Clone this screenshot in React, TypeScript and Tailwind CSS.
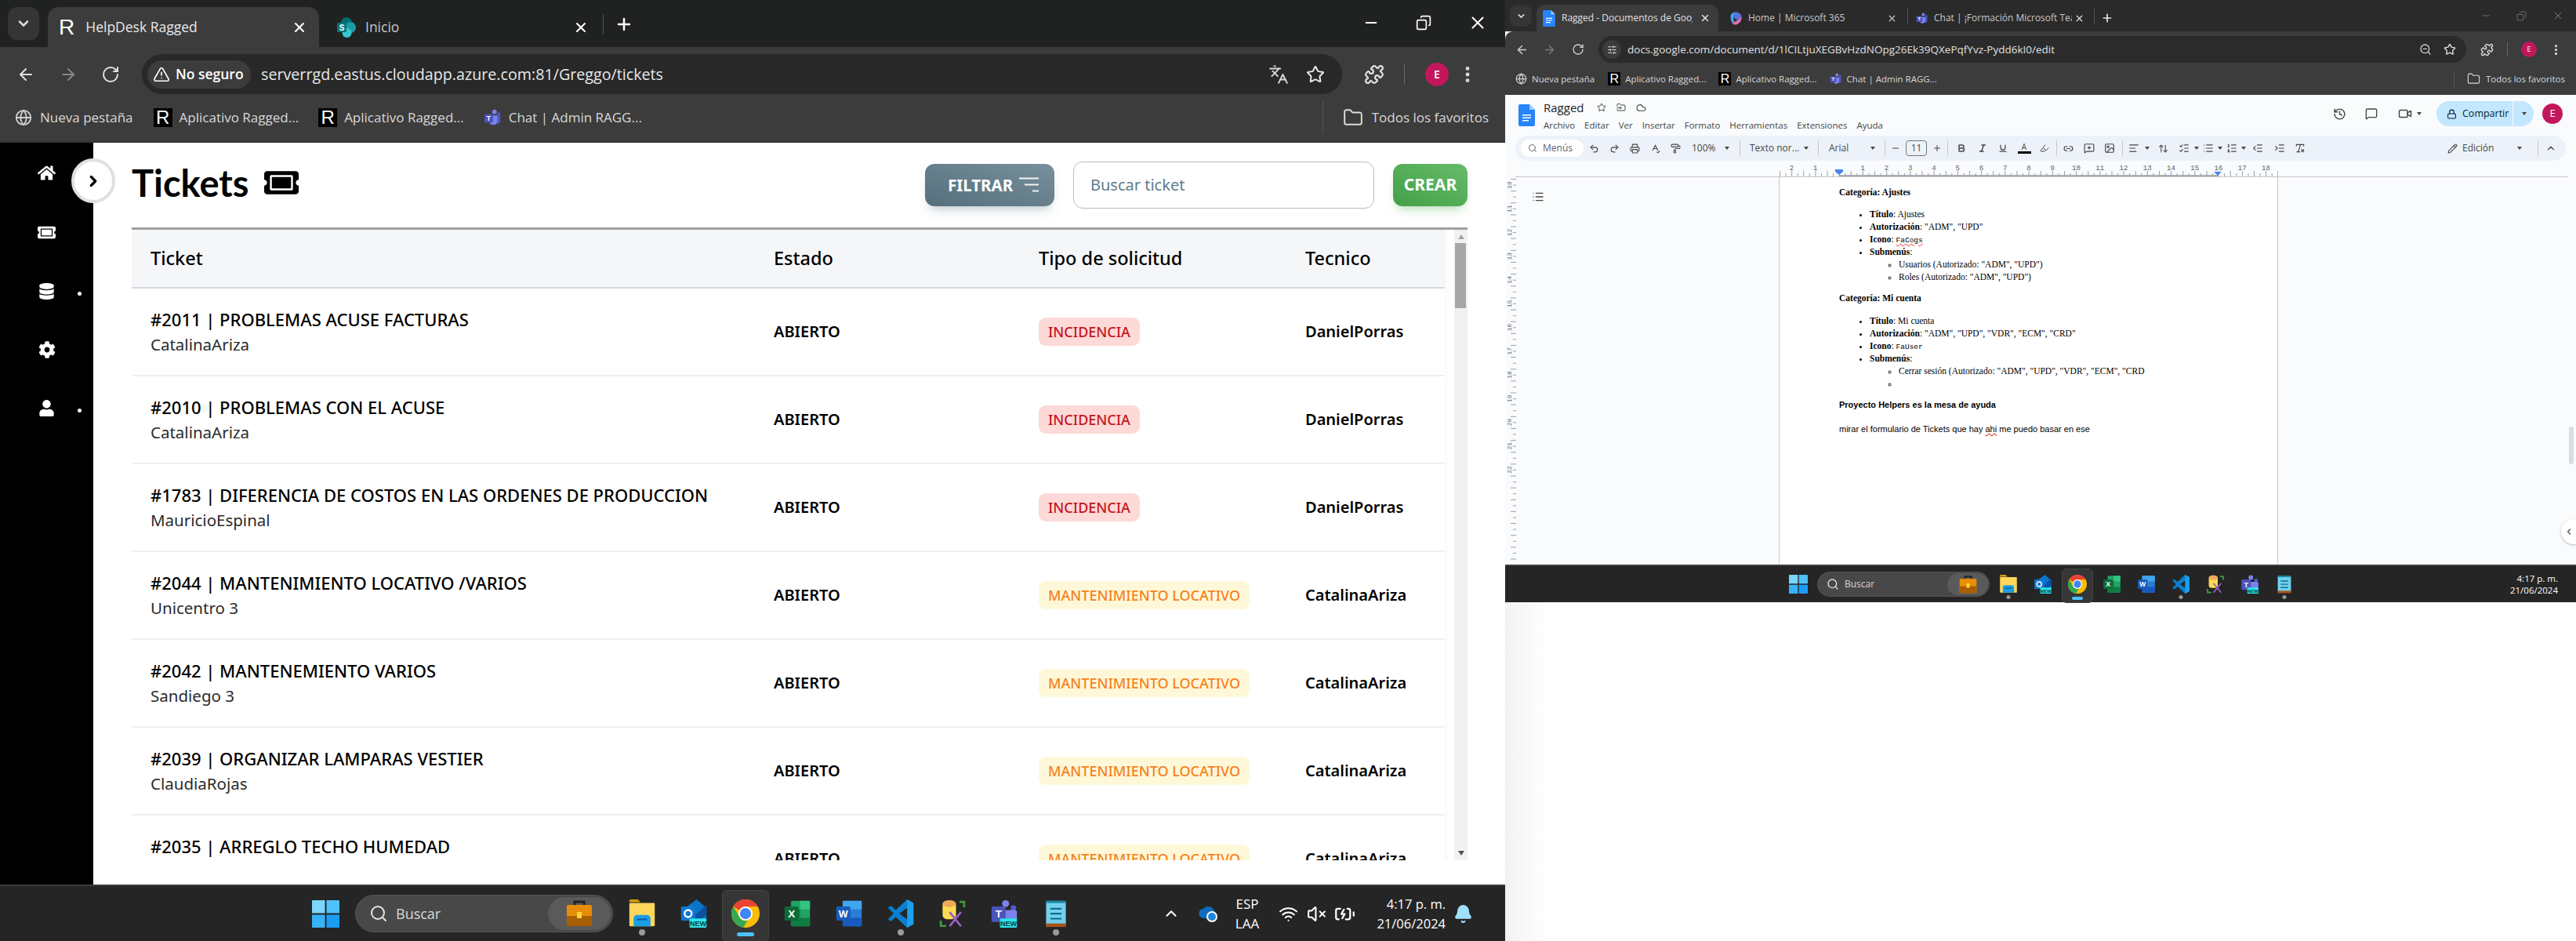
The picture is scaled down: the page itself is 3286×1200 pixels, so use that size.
import type {ReactNode} from 'react';
import {
  ArrowLeft,
  ArrowRight,
  AlignLeft,
  Bold,
  ChevronLeft,
  ChevronRight,
  ChevronUp,
  Cloud,
  Folder,
  Globe,
  History,
  Image,
  IndentDecrease,
  IndentIncrease,
  Italic,
  Link2,
  List,
  ListChecks,
  ListOrdered,
  Lock,
  MessageSquare,
  MessageSquarePlus,
  Minus,
  MoreVertical,
  PaintRoller,
  Pencil,
  Plus,
  Printer,
  Puzzle,
  Redo2,
  RotateCw,
  Search,
  SlidersHorizontal,
  SpellCheck,
  Star,
  TriangleAlert,
  Underline,
  Undo2,
  Video,
  X,
  ZoomOut,
  Bell,
  ChevronDown,
  Wifi,
  VolumeX,
  BatteryCharging,
  FolderInput,
  RemoveFormatting,
  Highlighter,
  Languages,
  Copy,
  ArrowUpDown,
} from 'lucide-react';
import {FaCog, FaDatabase, FaHome, FaTicketAlt, FaUser} from 'react-icons/fa';

const UI = "font-['Open_Sans',sans-serif]";
const PAGE = "font-['Noto_Sans',sans-serif]";

function RLogo({className}: {className: string}) {
  return (
    <span className={`flex items-center justify-center bg-black text-white font-['Liberation_Sans',sans-serif] font-normal ${className}`}>
      R
    </span>
  );
}

function TeamsIcon({size}: {size: number}) {
  return (
    <svg width={size} height={size} viewBox="0 0 24 24">
      <circle cx="15" cy="4" r="3.2" fill="#7b83eb" />
      <circle cx="21" cy="7" r="2.4" fill="#5059c9" />
      <path d="M14 9h9v8a4 4 0 0 1-5 3.5z" fill="#5059c9" />
      <path d="M8 9h11v9a6 6 0 0 1-11 1z" fill="#7b83eb" />
      <rect x="1" y="7" width="12" height="12" rx="1.5" fill="#4b53bc" />
      <text x="7" y="16.5" textAnchor="middle" fontSize="10" fontWeight="700" fill="#fff" fontFamily="Liberation Sans">T</text>
    </svg>
  );
}

function SharePointIcon() {
  return (
    <svg width="24" height="26" viewBox="0 0 24 26">
      <circle cx="12" cy="7" r="7" fill="#036c70" />
      <circle cx="17" cy="13" r="7" fill="#1a9ba1" />
      <circle cx="12.5" cy="20" r="6" fill="#37c6d0" />
      <rect x="0" y="7" width="12" height="12" rx="1.5" fill="#03787c" />
      <text x="6" y="16.5" textAnchor="middle" fontSize="10" fontWeight="700" fill="#fff" fontFamily="Liberation Sans">S</text>
    </svg>
  );
}

function DocsIcon({w, h}: {w: number; h: number}) {
  return (
    <svg width={w} height={h} viewBox="0 0 21 28">
      <path d="M2 0h12l7 7v19a2 2 0 0 1-2 2H2a2 2 0 0 1-2-2V2a2 2 0 0 1 2-2z" fill="#2684fc" />
      <path d="M14 0l7 7h-7z" fill="#a5c8fb" />
      <path d="M5 13h11v1.6H5zM5 16.5h11v1.6H5zM5 20h8v1.6H5z" fill="#fff" />
    </svg>
  );
}

function M365Icon() {
  return (
    <svg width="15" height="17" viewBox="0 0 15 17">
      <path d="M6 0.5C9 -0.5 14 2.5 14.5 6L11 12 4 7z" fill="#5b6fe0" />
      <path d="M0.5 6C0.5 3 3 1 6 0.5L4 7l1 6-2 2C1.5 13 0.5 9 0.5 6z" fill="#3fa9e8" />
      <path d="M5 13l6-3 3.5-4c.8 5-3 10.5-7.5 10.5-1.5 0-3-.5-4-1.5z" fill="#e66bb0" />
    </svg>
  );
}

function FileExplorer({size}: {size: number}) {
  return (
    <svg width={size} height={size} viewBox="0 0 36 40">
      <path d="M0 2a2 2 0 0 1 2-2h10l4 4H0z" fill="#d89c0b" />
      <rect x="0" y="5" width="36" height="33" rx="1.5" fill="#ffd65c" />
      <path d="M6 27a5 5 0 0 1 5-5h14a5 5 0 0 1 5 5v11H6z" fill="#1b9de2" />
      <rect x="11" y="27" width="14" height="2.4" fill="#0a5fb0" />
    </svg>
  );
}

function OutlookIcon({size}: {size: number}) {
  return (
    <svg width={size} height={size} viewBox="0 0 36 40">
      <path d="M6 12 22 0l14 12v18H6z" fill="#0a74c9" />
      <path d="M18 24 36 8v14L22 32z" fill="#0b4fa0" />
      <rect x="0" y="10" width="20" height="20" rx="2" fill="#0f78d4" />
      <circle cx="10" cy="20" r="5" fill="none" stroke="#fff" strokeWidth="2.6" />
      <rect x="12" y="27" width="24" height="13" rx="1.5" fill="#2ce6e6" />
      <text x="24" y="37.5" textAnchor="middle" fontSize="10" fontWeight="700" fill="#063a4a" fontFamily="Liberation Sans">NEW</text>
    </svg>
  );
}

function ChromeIcon({size}: {size: number}) {
  return (
    <svg width={size} height={size} viewBox="0 0 48 48">
      <circle cx="24" cy="24" r="24" fill="#fbbc04" />
      <path d="M24 0a24 24 0 0 1 20.8 12H24a12 12 0 0 0-10.4 6L3.2 12A24 24 0 0 1 24 0z" fill="#ea4335" />
      <path d="M3.2 12l10.4 18a12 12 0 0 0 13.4 5.6L20.6 47.8A24 24 0 0 1 3.2 12z" fill="#34a853" />
      <circle cx="24" cy="24" r="12" fill="#fff" />
      <circle cx="24" cy="24" r="9.5" fill="#4285f4" />
    </svg>
  );
}

function ExcelIcon({size}: {size: number}) {
  return (
    <svg width={size} height={size} viewBox="0 0 36 40">
      <rect x="9" y="2" width="27" height="36" rx="2" fill="#21a366" />
      <rect x="22" y="2" width="14" height="12" fill="#33c481" />
      <rect x="9" y="26" width="27" height="12" rx="1" fill="#107c41" />
      <rect x="9" y="14" width="13" height="12" fill="#107c41" />
      <rect x="0" y="10" width="20" height="20" rx="2" fill="#0c6b38" />
      <text x="10" y="25" textAnchor="middle" fontSize="15" fontWeight="700" fill="#fff" fontFamily="Liberation Sans">X</text>
    </svg>
  );
}

function WordIcon({size}: {size: number}) {
  return (
    <svg width={size} height={size} viewBox="0 0 36 40">
      <rect x="9" y="2" width="27" height="36" rx="2" fill="#2b7cd3" />
      <rect x="9" y="2" width="27" height="12" fill="#41a5ee" />
      <rect x="9" y="26" width="27" height="12" rx="1" fill="#185abd" />
      <rect x="0" y="10" width="20" height="20" rx="2" fill="#185abd" />
      <text x="10" y="25" textAnchor="middle" fontSize="14" fontWeight="700" fill="#fff" fontFamily="Liberation Sans">W</text>
    </svg>
  );
}

function VSCodeIcon({size}: {size: number}) {
  return (
    <svg width={size} height={size} viewBox="0 0 36 40">
      <path d="M27 0l9 5v30l-9 5-16-15-7 6-4-3 8-8-8-8 4-3 7 6z" fill="#0a7fd1" />
      <path d="M27 0l9 5v30l-9 5V28L16 20l11-8z" fill="#1ba1ee" />
      <path d="M27 12L16 20l11 8z" fill="#252525" />
    </svg>
  );
}

function DbToolIcon({size}: {size: number}) {
  return (
    <svg width={size} height={size} viewBox="0 0 36 40">
      <path d="M28 2h8v9h-3V5h-5zM0 30h3v6h6v3H0z" fill="#3f9b3f" />
      <rect x="4" y="2" width="19" height="26" rx="6" fill="#fbdc52" />
      <ellipse cx="13.5" cy="6" rx="9.5" ry="5" fill="#efa95a" />
      <path d="M14 38l16-20M30 38L14 18" stroke="#9b5fc0" strokeWidth="3" />
    </svg>
  );
}

function TeamsNewIcon({size}: {size: number}) {
  return (
    <svg width={size} height={size} viewBox="0 0 36 40">
      <circle cx="20" cy="6" r="5" fill="#7b83eb" />
      <circle cx="31" cy="12" r="4" fill="#5059c9" />
      <rect x="18" y="15" width="18" height="20" rx="3" fill="#7b83eb" />
      <rect x="0" y="10" width="20" height="22" rx="2" fill="#4b53bc" />
      <text x="10" y="26" textAnchor="middle" fontSize="15" fontWeight="700" fill="#fff" fontFamily="Liberation Sans">T</text>
      <rect x="12" y="27" width="24" height="13" rx="1.5" fill="#2ce6e6" />
      <text x="24" y="37.5" textAnchor="middle" fontSize="10" fontWeight="700" fill="#063a4a" fontFamily="Liberation Sans">NEW</text>
    </svg>
  );
}

function NotepadIcon({size}: {size: number}) {
  return (
    <svg width={size} height={size} viewBox="0 0 36 40">
      <rect x="4" y="2" width="28" height="36" rx="2" fill="#74d0ec" />
      <rect x="4" y="34" width="28" height="5" fill="#a5531d" />
      <path d="M4 2h28v3H4z" fill="#1487a8" />
      <path d="M10 12h16v2.4H10zM10 19h16v2.4H10zM10 26h16v2.4H10z" fill="#0e6f90" />
    </svg>
  );
}

function WinLogo({size}: {size: number}) {
  return (
    <svg width={size} height={size} viewBox="0 0 36 36">
      <path d="M1 0h16v17H0V1a1 1 0 0 1 1-1z" fill="#7bd6fd" />
      <path d="M19 0h16a1 1 0 0 1 1 1v16H19z" fill="#4dc2fb" />
      <path d="M0 19h17v17H1a1 1 0 0 1-1-1z" fill="#38b1f8" />
      <path d="M19 19h17v16a1 1 0 0 1-1 1H19z" fill="#1a9df5" />
    </svg>
  );
}

function Briefcase({size}: {size: number}) {
  return (
    <svg width={size} height={size} viewBox="0 0 34 34">
      <path d="M11 6V2h12v4" fill="none" stroke="#222" strokeWidth="3" />
      <rect x="1" y="6" width="32" height="27" rx="2" fill="#e88d07" />
      <rect x="1" y="20" width="32" height="13" rx="1" fill="#a85e03" />
      <rect x="14" y="15" width="6" height="8" fill="#ffd43a" />
    </svg>
  );
}

const taskApps = [
  {Icon: FileExplorer, dot: true, active: false},
  {Icon: OutlookIcon, dot: false, active: false},
  {Icon: ChromeIcon, dot: false, active: true},
  {Icon: ExcelIcon, dot: false, active: false},
  {Icon: WordIcon, dot: false, active: false},
  {Icon: VSCodeIcon, dot: true, active: false},
  {Icon: DbToolIcon, dot: false, active: false},
  {Icon: TeamsNewIcon, dot: false, active: false},
  {Icon: NotepadIcon, dot: true, active: false},
];

function TaskApps({size, large}: {size: number; large: boolean}) {
  return (
    <div className={`flex items-center ${large ? 'gap-[30px]' : 'gap-[20px]'}`}>
      {taskApps.map(({Icon, dot, active}, i) => (
        <div key={i} className="relative flex items-center justify-center">
          {active && (
            <span className={`absolute rounded-[6px] bg-[#363636] border border-[#444] ${large ? '-inset-x-[12px] -top-[12px] -bottom-[18px]' : '-inset-x-[8px] -top-[8px] -bottom-[12px]'}`} />
          )}
          <span className="relative flex">
            <Icon size={size} />
          </span>
          {dot && (
            <span className={`absolute left-1/2 -translate-x-1/2 rounded-full bg-[#9a9a9a] ${large ? 'w-[8px] h-[8px] -bottom-[10px]' : 'w-[5px] h-[5px] -bottom-[7px]'}`} />
          )}
          {active && (
            <span className={`absolute left-1/2 -translate-x-1/2 rounded-full bg-[#4cc2ff] ${large ? 'w-[22px] h-[5px] -bottom-[11px]' : 'w-[14px] h-[4px] -bottom-[8px]'}`} />
          )}
        </div>
      ))}
    </div>
  );
}

function Taskbar({large}: {large: boolean}) {
  if (large) {
    return (
      <footer className={`h-[72px] shrink-0 bg-[#252525] border-t-2 border-[#3d3d3d] flex items-center text-white ${UI}`}>
        <div className="ml-[398px]">
          <WinLogo size={35} />
        </div>
        <div className="ml-[20px] w-[329px] h-[48px] rounded-full bg-[#484848] border border-[#555] flex items-center pl-[17px] pr-[2px]">
          <Search size={24} strokeWidth={2} className="text-[#e5e5e5]" />
          <span className="ml-[10px] text-[18px] text-[#d8d8d8]">Buscar</span>
          <span className="ml-auto w-[80px] h-[42px] rounded-full bg-[#5a5a5a] flex items-center justify-center">
            <Briefcase size={34} />
          </span>
        </div>
        <div className="ml-[19px]">
          <TaskApps size={36} large />
        </div>
        <ChevronUp size={22} strokeWidth={2.2} className="ml-[118px]" />
        <svg width="24" height="26" viewBox="0 0 24 26" className="ml-[24px]">
          <path d="M3 18a6 6 0 0 1 3-11 8 8 0 0 1 14 3 5 5 0 0 1-1 9H6z" fill="#0f6cbd" />
          <circle cx="17" cy="17" r="7" fill="#fff" />
          <circle cx="17" cy="17" r="5" fill="#1a86d8" />
        </svg>
        <div className="ml-[18px] w-[40px] flex flex-col items-center text-[17px] leading-[25px]">
          <span>ESP</span>
          <span>LAA</span>
        </div>
        <Wifi size={25} className="ml-[20px]" />
        <VolumeX size={25} className="ml-[11px]" />
        <BatteryCharging size={27} className="ml-[10px]" />
        <div className="ml-[20px] w-[95px] flex flex-col items-end text-[16.5px] leading-[25px]">
          <span className="whitespace-nowrap">4:17 p. m.</span>
          <span>21/06/2024</span>
        </div>
        <Bell size={25} fill="#9fe0fb" stroke="#9fe0fb" className="ml-[10px]" />
      </footer>
    );
  }
  return (
    <footer className={`h-[48px] shrink-0 bg-[#252525] border-t-2 border-[#3d3d3d] flex items-center text-white ${UI}`}>
      <div className="ml-[362px]">
        <WinLogo size={24} />
      </div>
      <div className="ml-[12px] w-[220px] h-[32px] rounded-full bg-[#484848] border border-[#555] flex items-center pl-[11px] pr-[1px]">
        <Search size={16} className="text-[#e5e5e5]" />
        <span className="ml-[7px] text-[12px] text-[#d8d8d8]">Buscar</span>
        <span className="ml-auto w-[52px] h-[28px] rounded-full bg-[#5a5a5a] flex items-center justify-center">
          <Briefcase size={23} />
        </span>
      </div>
      <div className="ml-[12px]">
        <TaskApps size={24} large={false} />
      </div>
      <div className="ml-auto mr-[23px] flex flex-col items-end text-[11.5px] leading-[15px]">
        <span>4:17 p. m.</span>
        <span>21/06/2024</span>
      </div>
    </footer>
  );
}

function LeftChrome() {
  return (
    <div className={`shrink-0 ${UI} text-[#dcdcdc]`}>
      <div className="h-[60px] bg-[#202222] flex items-end pl-[10px] relative">
        <span className="mb-[9px] w-[40px] h-[42px] rounded-[12px] bg-[#353535] flex items-center justify-center">
          <ChevronDown size={20} strokeWidth={3} />
        </span>
        <div className="ml-[11px] w-[346px] h-[51px] rounded-t-[14px] bg-[#3c3c3c] flex items-center pl-[14px] pr-[15px]">
          <span className="text-[28px] font-['Liberation_Sans',sans-serif] text-white leading-none">R</span>
          <span className="ml-[14px] text-[17.5px] text-[#e8e8e8]">HelpDesk Ragged</span>
          <X size={20} strokeWidth={2.5} className="ml-auto text-white" />
        </div>
        <div className="w-[362px] h-[51px] flex items-center pl-[23px] pr-[18px] border-r-0">
          <SharePointIcon />
          <span className="ml-[12px] text-[17.5px] text-[#c8c8c8]">Inicio</span>
          <X size={20} strokeWidth={2.5} className="ml-auto text-white" />
        </div>
        <div className="mb-[8px] h-[43px] flex items-center">
          <span className="w-[1px] h-[26px] bg-[#555]" />
          <Plus size={24} strokeWidth={2.5} className="ml-[14px] text-white" />
        </div>
        <div className="ml-auto flex items-center gap-[46px] pr-[22px] self-start h-[58px]">
          <Minus size={22} strokeWidth={2} className="text-white" />
          <Copy size={20} strokeWidth={2} className="text-white -scale-x-100" />
          <X size={26} strokeWidth={1.8} className="text-white" />
        </div>
      </div>
      <div className="h-[60px] bg-[#3c3c3c] flex items-center pt-[9px] pl-[21px] pr-[21px]">
        <ArrowLeft size={24} strokeWidth={2} className="text-[#e0e0e0]" />
        <ArrowRight size={24} strokeWidth={2} className="ml-[30px] text-[#858585]" />
        <RotateCw size={24} strokeWidth={2} className="ml-[30px] text-[#e0e0e0]" />
        <div className="ml-[28px] w-[1531px] h-[51px] rounded-full bg-[#282828] flex items-center pl-[7px] pr-[22px]">
          <span className="w-[132px] h-[36px] rounded-full bg-[#3c3c3c] flex items-center pl-[7px]">
            <TriangleAlert size={22} strokeWidth={1.8} className="text-white" />
            <span className="ml-[7px] text-[17.5px] font-semibold text-white whitespace-nowrap">No seguro</span>
          </span>
          <span className="ml-[13px] text-[19.7px] text-[#e8e8e8]">serverrgd.eastus.cloudapp.azure.com:81/Greggo/tickets</span>
          <Languages size={26} strokeWidth={1.8} className="ml-auto text-[#d8d8d8]" />
          <Star size={24} strokeWidth={2} className="ml-[22px] text-[#e8e8e8]" />
        </div>
        <Puzzle size={26} strokeWidth={2} className="ml-[28px] text-[#e0e0e0]" />
        <span className="ml-[25px] w-[1px] h-[26px] bg-[#666]" />
        <span className="ml-[26px] w-[30px] h-[30px] rounded-full bg-[#c2185b] flex items-center justify-center text-white text-[14px] font-semibold">E</span>
        <MoreVertical size={26} strokeWidth={2.5} className="ml-[11px] text-[#dcdcdc]" />
      </div>
      <div className="h-[62px] bg-[#3c3c3c] flex items-center pl-[19px] pr-[21px] border-b-2 border-[#343434] text-[17px] text-[#d8d8d8]">
        <Globe size={22} className="text-[#cfcfcf]" />
        <span className="ml-[10px] whitespace-nowrap">Nueva pestaña</span>
        <RLogo className="ml-[26px] w-[24px] h-[24px] text-[24px]" />
        <span className="ml-[9px] whitespace-nowrap">Aplicativo Ragged...</span>
        <RLogo className="ml-[25px] w-[24px] h-[24px] text-[24px]" />
        <span className="ml-[9px] whitespace-nowrap">Aplicativo Ragged...</span>
        <span className="ml-[25px] flex">
          <TeamsIcon size={22} />
        </span>
        <span className="ml-[10px] whitespace-nowrap">Chat | Admin RAGG...</span>
        <span className="ml-auto w-[1px] h-[42px] bg-[#555]" />
        <Folder size={26} strokeWidth={1.8} className="ml-[25px] text-[#dcdcdc]" />
        <span className="ml-[11px] whitespace-nowrap">Todos los favoritos</span>
      </div>
    </div>
  );
}

type TicketRow = {
  title: string;
  owner: string;
  type: 'INCIDENCIA' | 'MANTENIMIENTO LOCATIVO';
  tech: string;
};

const rows: TicketRow[] = [
  {title: '#2011 | PROBLEMAS ACUSE FACTURAS', owner: 'CatalinaAriza', type: 'INCIDENCIA', tech: 'DanielPorras'},
  {title: '#2010 | PROBLEMAS CON EL ACUSE', owner: 'CatalinaAriza', type: 'INCIDENCIA', tech: 'DanielPorras'},
  {title: '#1783 | DIFERENCIA DE COSTOS EN LAS ORDENES DE PRODUCCION', owner: 'MauricioEspinal', type: 'INCIDENCIA', tech: 'DanielPorras'},
  {title: '#2044 | MANTENIMIENTO LOCATIVO /VARIOS', owner: 'Unicentro 3', type: 'MANTENIMIENTO LOCATIVO', tech: 'CatalinaAriza'},
  {title: '#2042 | MANTENEMIENTO VARIOS', owner: 'Sandiego 3', type: 'MANTENIMIENTO LOCATIVO', tech: 'CatalinaAriza'},
  {title: '#2039 | ORGANIZAR LAMPARAS VESTIER', owner: 'ClaudiaRojas', type: 'MANTENIMIENTO LOCATIVO', tech: 'CatalinaAriza'},
  {title: '#2035 | ARREGLO TECHO HUMEDAD', owner: '\u00a0', type: 'MANTENIMIENTO LOCATIVO', tech: 'CatalinaAriza'},
];

function TicketsPage() {
  return (
    <div className="flex-1 min-h-0 flex bg-white relative">
      <aside className="w-[119px] shrink-0 bg-black text-white flex flex-col items-center pt-[27px] gap-[53px]">
        <FaHome size={23} />
        <FaTicketAlt size={23} />
        <div className="relative flex">
          <FaDatabase size={21} />
          <span className="absolute -right-[34px] top-[11px] w-[5px] h-[5px] rounded-full bg-white" />
        </div>
        <FaCog size={22} />
        <div className="relative flex">
          <FaUser size={21} />
          <span className="absolute -right-[34px] top-[11px] w-[5px] h-[5px] rounded-full bg-white" />
        </div>
      </aside>
      <span className="absolute left-[91px] top-[20px] w-[56px] h-[57px] rounded-full bg-white border-[4px] border-[#e0e0e0] flex items-center justify-center">
        <ChevronRight size={22} strokeWidth={3.5} className="text-black" />
      </span>
      <main className={`flex-1 min-w-0 pl-[49px] pr-[48px] flex flex-col ${PAGE}`}>
        <div className="h-[108px] shrink-0 flex items-center">
          <h1 className="text-[47px] font-['Lato',sans-serif] font-bold text-black leading-none mt-[-6px]">Tickets</h1>
          <FaTicketAlt size={44} className="ml-[20px] mt-[-6px] text-black" />
          <button className="ml-auto w-[165px] h-[54px] rounded-[12px] bg-linear-to-tr from-[#566f7d] to-[#78909c] shadow-[0_8px_14px_-6px_rgba(96,125,139,0.5)] text-white flex items-center pl-[29px] text-[20.5px] font-bold">
            FILTRAR
            <svg width="25" height="22" viewBox="0 0 25 22" className="ml-[8px]">
              <path d="M0 2.5h25M7 10.5h18M17 18.5h8" stroke="#fff" strokeWidth="2" opacity="0.9" />
            </svg>
          </button>
          <div className="ml-[24px] w-[384px] h-[60px] rounded-[12px] border border-[#b0bec5] bg-white flex items-center pl-[21px] text-[20px] text-[#607d8b]">
            Buscar ticket
          </div>
          <button className="ml-[24px] w-[95px] h-[54px] rounded-[12px] bg-linear-to-tr from-[#43a047] to-[#66bb6a] shadow-[0_8px_14px_-6px_rgba(76,175,80,0.5)] text-white text-[21px] font-bold">
            CREAR
          </button>
        </div>
        <div className="h-[807px] shrink-0 border-t-[3px] border-[#a0a0a0] flex overflow-hidden">
          <div className="flex-1 min-w-0 shadow-[2px_0_4px_rgba(0,0,0,0.04)]">
            <div className="h-[75px] bg-[#f5f6f8] border-b-2 border-[#d5dbe1] grid grid-cols-[795px_338px_340px_1fr] items-center text-[23.5px] font-medium text-black">
              <span className="pl-[24px]">Ticket</span>
              <span className="pl-[24px]">Estado</span>
              <span className="pl-[24px]">Tipo de solicitud</span>
              <span className="pl-[24px]">Tecnico</span>
            </div>
            {rows.map((row) => (
              <div key={row.title} className="h-[112px] border-b-2 border-[#eeeff1] grid grid-cols-[795px_338px_340px_1fr] items-center text-black">
                <div className="pl-[24px]">
                  <div className="text-[22px] font-medium leading-[32px] whitespace-nowrap">{row.title}</div>
                  <div className="text-[20.5px] leading-[32px] text-[#2b2b2b]">{row.owner}</div>
                </div>
                <span className="pl-[24px] text-[20px] font-semibold">ABIERTO</span>
                <div className="pl-[24px]">
                  {row.type === 'INCIDENCIA' ? (
                    <span className="inline-flex h-[36px] items-center rounded-[9px] bg-[#fdd9d7] px-[12px] text-[18px] font-medium text-[#c4161c]">
                      INCIDENCIA
                    </span>
                  ) : (
                    <span className="inline-flex h-[36px] items-center rounded-[9px] bg-[#fff8d8] px-[12px] text-[18px] font-medium text-[#f5821f] whitespace-nowrap">
                      MANTENIMIENTO LOCATIVO
                    </span>
                  )}
                </div>
                <span className="pl-[24px] text-[20px] font-semibold">{row.tech}</span>
              </div>
            ))}
          </div>
          <div className="ml-[12px] w-[17px] shrink-0 bg-[#f1f1f1] relative">
            <span className="absolute left-[5px] top-[6px] border-x-[4px] border-x-transparent border-b-[6px] border-b-[#a3a3a3]" />
            <span className="absolute left-[1px] right-[2px] top-[17px] h-[83px] bg-[#a8a8a8]" />
            <span className="absolute left-[5px] bottom-[6px] border-x-[4px] border-x-transparent border-t-[6px] border-t-[#505050]" />
          </div>
        </div>
      </main>
    </div>
  );
}

function RightChrome() {
  return (
    <div className={`shrink-0 ${UI} text-[#dcdcdc]`}>
      <div className="h-[40px] bg-[#2a2a2a] flex items-end pl-[6px] pr-[15px]">
        <span className="mb-[6px] w-[28px] h-[28px] rounded-[9px] bg-[#353535] flex items-center justify-center">
          <ChevronDown size={13} strokeWidth={3} />
        </span>
        <div className="ml-[6px] w-[232px] h-[34px] rounded-t-[10px] bg-[#3c3c3c] flex items-center pl-[8px] pr-[10px]">
          <DocsIcon w={16} h={21} />
          <span className="ml-[8px] text-[12px] w-[167px] overflow-hidden whitespace-nowrap text-[#e0e0e0]">Ragged - Documentos de Goog</span>
          <X size={14} strokeWidth={2.5} className="ml-auto text-[#e0e0e0]" />
        </div>
        <div className="w-[241px] h-[34px] flex items-center pl-[15px] pr-[13px]">
          <M365Icon />
          <span className="ml-[8px] text-[12px] text-[#c8c8c8] whitespace-nowrap">Home | Microsoft 365</span>
          <X size={13} strokeWidth={2.5} className="ml-auto text-[#bdbdbd]" />
        </div>
        <div className="w-[238px] h-[34px] flex items-center pl-[11px] pr-[12px] relative">
          <span className="absolute left-0 top-[5px] w-[1px] h-[20px] bg-[#555]" />
          <TeamsIcon size={15} />
          <span className="ml-[8px] text-[12px] w-[176px] overflow-hidden whitespace-nowrap text-[#c8c8c8]">Chat | ¡Formación Microsoft Tea</span>
          <X size={13} strokeWidth={2.5} className="ml-auto text-[#d8d8d8]" />
        </div>
        <div className="h-[34px] flex items-center pl-[9px] relative">
          <span className="absolute left-0 top-[5px] w-[1px] h-[20px] bg-[#555]" />
          <Plus size={16} strokeWidth={2.5} className="text-[#e8e8e8]" />
        </div>
        <div className="ml-auto self-start h-[40px] flex items-center gap-[32px] text-[#7a7a7a]">
          <Minus size={14} strokeWidth={1.5} />
          <Copy size={13} strokeWidth={1.5} className="-scale-x-100" />
          <X size={16} strokeWidth={1.5} />
        </div>
      </div>
      <div className="h-[40px] bg-[#3c3c3c] rounded-tl-[10px] flex items-center pt-[6px] pl-[13px] pr-[14px]">
        <ArrowLeft size={17} strokeWidth={2} className="text-[#cfcfcf]" />
        <ArrowRight size={17} strokeWidth={2} className="ml-[18px] text-[#7e7e7e]" />
        <RotateCw size={16} strokeWidth={2} className="ml-[20px] text-[#cfcfcf]" />
        <div className="ml-[18px] w-[1107px] h-[34px] rounded-full bg-[#2b2b2b] flex items-center pl-[5px] pr-[13px]">
          <span className="w-[24px] h-[24px] rounded-full bg-[#3c3c3c] flex items-center justify-center">
            <SlidersHorizontal size={13} className="text-[#dcdcdc]" />
          </span>
          <span className="ml-[8px] text-[13.5px] text-[#e0e0e0] whitespace-nowrap">docs.google.com/document/d/1lCILtjuXEGBvHzdNOpg26Ek39QXePqfYvz-Pydd6kI0/edit</span>
          <ZoomOut size={16} className="ml-auto text-[#d0d0d0]" />
          <Star size={16} strokeWidth={2} className="ml-[15px] text-[#e0e0e0]" />
        </div>
        <Puzzle size={17} strokeWidth={2} className="ml-[18px] text-[#dcdcdc]" />
        <span className="ml-[17px] w-[1px] h-[18px] bg-[#666]" />
        <span className="ml-[17px] w-[20px] h-[20px] rounded-full bg-[#c2185b] flex items-center justify-center text-white text-[9px]">E</span>
        <MoreVertical size={17} strokeWidth={2.5} className="ml-[16px] text-[#dcdcdc]" />
      </div>
      <div className="h-[41px] bg-[#3c3c3c] flex items-center pl-[13px] pr-[14px] text-[11.5px] text-[#d8d8d8]">
        <Globe size={15} className="text-[#cfcfcf]" />
        <span className="ml-[6px] whitespace-nowrap">Nueva pestaña</span>
        <RLogo className="ml-[17px] w-[16px] h-[17px] text-[16px]" />
        <span className="ml-[6px] whitespace-nowrap">Aplicativo Ragged...</span>
        <RLogo className="ml-[16px] w-[16px] h-[17px] text-[16px]" />
        <span className="ml-[6px] whitespace-nowrap">Aplicativo Ragged...</span>
        <span className="ml-[16px] flex">
          <TeamsIcon size={15} />
        </span>
        <span className="ml-[7px] whitespace-nowrap">Chat | Admin RAGG...</span>
        <span className="ml-auto w-[1px] h-[20px] bg-[#5a5a5a]" />
        <Folder size={17} strokeWidth={1.6} className="ml-[16px] text-[#dcdcdc]" />
        <span className="ml-[7px] whitespace-nowrap">Todos los favoritos</span>
      </div>
    </div>
  );
}

function ToolIcon({w, children}: {w: string; children: ReactNode}) {
  return <span className={`flex items-center justify-center shrink-0 ${w}`}>{children}</span>;
}

function Caret({className = ''}: {className?: string}) {
  return <span className={`border-x-[3.5px] border-x-transparent border-t-[4px] border-t-[#444746] shrink-0 ${className}`} />;
}

function ToolSep({className = ''}: {className?: string}) {
  return <span className={`w-[1px] h-[20px] bg-[#c7c7c7] shrink-0 ${className}`} />;
}

function DocsHeader() {
  const menus = ['Archivo', 'Editar', 'Ver', 'Insertar', 'Formato', 'Herramientas', 'Extensiones', 'Ayuda'];
  return (
    <div className={`h-[52px] shrink-0 flex pl-[17px] pr-[17px] ${UI}`}>
      <div className="pt-[12px]">
        <DocsIcon w={21} h={28} />
      </div>
      <div className="ml-[11px] pt-[5px]">
        <div className="flex items-center text-[#444746]">
          <span className="text-[15px] leading-[22px] text-[#1f1f1f]">Ragged</span>
          <Star size={12} className="ml-[17px]" />
          <FolderInput size={12} className="ml-[13px]" />
          <Cloud size={13} className="ml-[13px]" />
        </div>
        <div className="mt-[3px] flex gap-[12px] text-[11.5px] leading-[18px] text-[#444746]">
          {menus.map((m) => (
            <span key={m}>{m}</span>
          ))}
        </div>
      </div>
      <div className="ml-auto flex items-center h-[48px] text-[#444746]">
        <History size={17} />
        <MessageSquare size={16} className="ml-[24px]" />
        <Video size={18} className="ml-[26px]" />
        <Caret className="ml-[6px]" />
        <div className="ml-[19px] w-[124px] h-[32px] rounded-full bg-[#c2e7ff] flex items-center pl-[13px] text-[12.5px] text-[#001d35]">
          <Lock size={13} />
          <span className="ml-[7px]">Compartir</span>
          <span className="ml-[5px] w-[1px] h-[32px] bg-[#f9fbfd]" />
          <Caret className="ml-[11px]" />
        </div>
        <span className="ml-[11px] w-[26px] h-[26px] rounded-full bg-[#c2185b] flex items-center justify-center text-white text-[13px]">E</span>
      </div>
    </div>
  );
}

function DocsToolbar() {
  const ink = 'text-[#444746]';
  return (
    <div className={`mx-[13px] h-[32px] shrink-0 rounded-full bg-[#edf2fa] flex items-center pl-[7px] pr-[12px] text-[12px] ${ink} ${UI}`}>
      <span className="w-[80px] h-[22px] rounded-full bg-white flex items-center pl-[9px] text-[#5f6368]">
        <Search size={12} />
        <span className="ml-[7px]">Menús</span>
      </span>
      <ToolIcon w="w-[26px]"><Undo2 size={13} /></ToolIcon>
      <ToolIcon w="w-[26px]"><Redo2 size={13} /></ToolIcon>
      <ToolIcon w="w-[26px]"><Printer size={13} /></ToolIcon>
      <ToolIcon w="w-[26px]"><SpellCheck size={13} /></ToolIcon>
      <ToolIcon w="w-[26px]"><PaintRoller size={13} /></ToolIcon>
      <span className="ml-[8px] w-[42px] shrink-0">100%</span>
      <Caret />
      <ToolSep className="ml-[13px]" />
      <span className="ml-[12px] w-[69px] shrink-0 whitespace-nowrap">Texto nor...</span>
      <Caret />
      <ToolSep className="ml-[12px]" />
      <span className="ml-[13px] w-[53px] shrink-0">Arial</span>
      <Caret />
      <ToolSep className="ml-[12px]" />
      <ToolIcon w="w-[26px]"><Minus size={12} /></ToolIcon>
      <span className="w-[27px] h-[20px] rounded-[4px] border border-[#747775] flex items-center justify-center shrink-0">11</span>
      <ToolIcon w="w-[26px]"><Plus size={12} /></ToolIcon>
      <ToolSep />
      <ToolIcon w="w-[29px] ml-[2px]"><Bold size={12} strokeWidth={3} /></ToolIcon>
      <ToolIcon w="w-[25px]"><Italic size={12} strokeWidth={3} /></ToolIcon>
      <ToolIcon w="w-[28px]"><Underline size={12} strokeWidth={2.5} /></ToolIcon>
      <span className="w-[26px] shrink-0 flex flex-col items-center">
        <span className="text-[10px] leading-[11px]">A</span>
        <span className="w-[17px] h-[3px] bg-black" />
      </span>
      <ToolIcon w="w-[26px]"><Highlighter size={12} /></ToolIcon>
      <ToolSep className="ml-[2px]" />
      <ToolIcon w="w-[28px]"><Link2 size={13} /></ToolIcon>
      <ToolIcon w="w-[26px]"><MessageSquarePlus size={14} /></ToolIcon>
      <ToolIcon w="w-[26px]"><Image size={14} /></ToolIcon>
      <ToolSep className="ml-[3px]" />
      <ToolIcon w="w-[28px]"><AlignLeft size={14} /></ToolIcon>
      <Caret />
      <ToolIcon w="w-[34px]"><ArrowUpDown size={13} /></ToolIcon>
      <ToolIcon w="w-[20px]"><ListChecks size={14} /></ToolIcon>
      <Caret className="ml-[3px]" />
      <ToolIcon w="w-[24px]"><List size={14} /></ToolIcon>
      <Caret />
      <ToolIcon w="w-[24px]"><ListOrdered size={14} /></ToolIcon>
      <Caret />
      <ToolIcon w="w-[30px]"><IndentDecrease size={14} /></ToolIcon>
      <ToolIcon w="w-[26px]"><IndentIncrease size={14} /></ToolIcon>
      <ToolIcon w="w-[26px]"><RemoveFormatting size={14} /></ToolIcon>
      <span className="ml-auto flex items-center">
        <Pencil size={13} />
        <span className="ml-[6px] w-[70px]">Edición</span>
        <Caret />
        <ToolSep className="ml-[20px]" />
        <ChevronUp size={14} className="ml-[9px]" />
      </span>
    </div>
  );
}

function HorizontalRuler() {
  const zero = 76;
  const unit = 30.25;
  const ticks = Array.from({length: 85}, (_, i) => i);
  const labels = [-2, -1, 1, 2, 3, 4, 5, 6, 7, 8, 9, 10, 11, 12, 13, 14, 15, 16, 17, 18];
  return (
    <svg width="636" height="20" className="block">
      <path d="M76 19H560" stroke="#5f6368" strokeWidth="1" />
      {ticks.map((i) => {
        const x = 1 + i * (unit / 4) - 0.5;
        const tall = i % 2 === 0;
        return <path key={i} d={`M${x} ${tall ? 13 : 16}V20`} stroke="#9aa0a6" strokeWidth="1" />;
      })}
      {labels.map((n) => (
        <text key={n} x={zero + n * unit} y="12" textAnchor="middle" fontSize="9" fill="#5f6368" fontFamily="Liberation Mono">
          {Math.abs(n)}
        </text>
      ))}
      <path d="M71 11h10v3l-5 4-5-4z" fill="#4a86e8" />
      <path d="M554 14h10l-5 5z" fill="#4a86e8" />
    </svg>
  );
}

function VerticalRuler() {
  const labels = [10, 11, 12, 13, 14, 15, 16, 17, 18, 19, 20, 21, 22];
  const ticks = Array.from({length: 66}, (_, i) => i);
  return (
    <svg width="14" height="493" className="block shrink-0">
      {ticks.map((i) => (
        <path key={i} d={`M${i % 2 === 0 ? 7 : 10} ${2.5 + i * 7.57}H14`} stroke="#9aa0a6" strokeWidth="1" />
      ))}
      {labels.map((n, i) => (
        <text key={n} x="0" y="0" transform={`translate(8 ${10 + i * 30.25}) rotate(-90)`} textAnchor="middle" fontSize="8" fill="#5f6368" fontFamily="Liberation Mono">
          {n}
        </text>
      ))}
    </svg>
  );
}

function DocPage() {
  const strong = 'font-bold';
  const li = 'h-[16px] leading-[16px]';
  return (
    <div className="w-[637px] h-[493px] bg-white border-x border-[#c7c7c7] pt-[11px] pl-[76px] font-['Liberation_Serif',serif] text-[11.5px] text-black">
      <div className={`${strong} leading-[16px]`}>Categoría: Ajustes</div>
      <ul className="mt-[12px] list-disc pl-[39px]">
        <li className={li}><b>Título</b>: Ajustes</li>
        <li className={li}><b>Autorización</b>: "ADM", "UPD"</li>
        <li className={li}>
          <b>Icono</b>:{' '}
          <span className="font-['Liberation_Mono',monospace] text-[9.5px] underline decoration-wavy decoration-[#d93025]">FaCogs</span>
        </li>
        <li className={li}><b>Submenús</b>:</li>
        <ul className="list-[circle] pl-[37px]">
          <li className={li}>Usuarios (Autorizado: "ADM", "UPD")</li>
          <li className={li}>Roles (Autorizado: "ADM", "UPD")</li>
        </ul>
      </ul>
      <div className={`mt-[11px] ${strong} leading-[16px]`}>Categoría: Mi cuenta</div>
      <ul className="mt-[13px] list-disc pl-[39px]">
        <li className={li}><b>Título</b>: Mi cuenta</li>
        <li className={li}><b>Autorización</b>: "ADM", "UPD", "VDR", "ECM", "CRD"</li>
        <li className={li}>
          <b>Icono</b>:{' '}
          <span className="font-['Liberation_Mono',monospace] text-[9.5px]">FaUser</span>
        </li>
        <li className={li}><b>Submenús</b>:</li>
        <ul className="list-[circle] pl-[37px]">
          <li className={`${li} whitespace-nowrap`}>Cerrar sesión (Autorizado: "ADM", "UPD", "VDR", "ECM", "CRD</li>
          <li className={li}>&nbsp;</li>
        </ul>
      </ul>
      <div className="mt-[11px] font-['Liberation_Sans',sans-serif] text-[11px] font-bold leading-[16px]">Proyecto Helpers es la mesa de ayuda</div>
      <div className="mt-[15px] font-['Liberation_Sans',sans-serif] text-[11px] leading-[16px]">
        mirar el formulario de Tickets que hay <span className="underline decoration-wavy decoration-[#d93025]">ahi</span> me puedo basar en ese
      </div>
    </div>
  );
}

function DocsWorkspace() {
  return (
    <div className="flex-1 min-h-0 flex flex-col relative">
      <div className="h-[20px] shrink-0 pl-[350px] flex items-start">
        <HorizontalRuler />
      </div>
      <div className="flex flex-1 min-h-0 border-t border-[#c7c7c7] ml-[13px] mr-[10px] relative">
        <div className="w-[336px] shrink-0 pl-[21px] pt-[17px] text-[#444746]">
          <List size={16} />
        </div>
        <DocPage />
      </div>
      <div className="absolute left-0 top-[21px]">
        <VerticalRuler />
      </div>
      <span className="absolute right-[3px] top-[339px] w-[6px] h-[48px] rounded-full bg-[#dadce0]" />
      <span className="absolute right-0 top-[457px] w-[19px] h-[32px] rounded-l-full bg-white shadow-[0_1px_3px_rgba(60,64,67,0.35)] flex items-center justify-center">
        <ChevronLeft size={12} strokeWidth={2.5} className="text-[#444746]" />
      </span>
    </div>
  );
}

export default function App() {
  return (
    <div className="w-[3286px] h-[1200px] flex bg-white overflow-hidden">
      <section className="w-[1920px] h-[1200px] shrink-0 flex flex-col">
        <LeftChrome />
        <TicketsPage />
        <Taskbar large />
      </section>
      <section className="w-[1366px] flex flex-col">
        <div className="h-[720px] shrink-0 flex flex-col bg-[#f9fbfd]">
          <RightChrome />
          <DocsHeader />
          <DocsToolbar />
          <DocsWorkspace />
        </div>
        <Taskbar large={false} />
        <div className="flex-1 bg-linear-to-r from-[#f2f2f2] to-white to-[4%]" />
      </section>
    </div>
  );
}
